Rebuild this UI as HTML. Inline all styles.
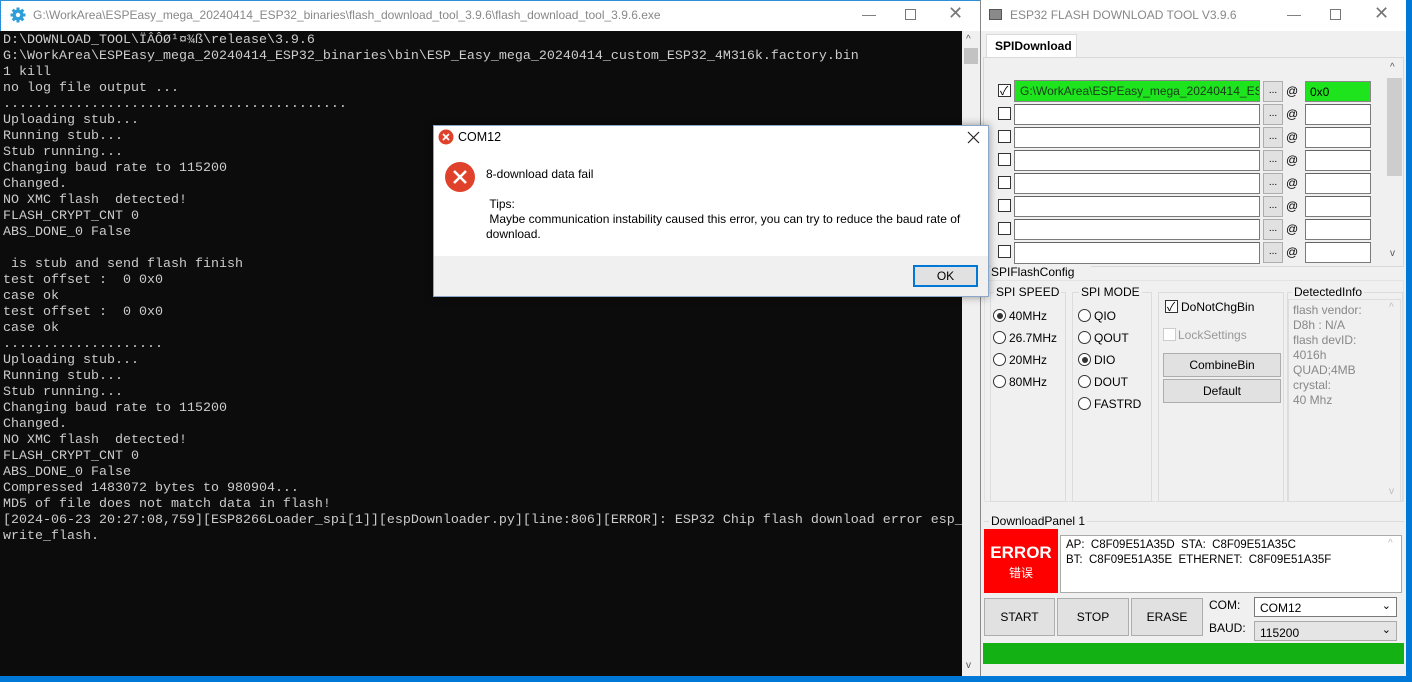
<!DOCTYPE html>
<html><head><meta charset="utf-8"><style>
*{margin:0;padding:0;box-sizing:border-box}
body{width:1412px;height:682px;overflow:hidden;background:#0078d7;position:relative;font-family:"Liberation Sans","Noto Sans CJK SC",sans-serif;font-size:12px;color:#000}
.a{position:absolute}
.con{left:0;top:31px;width:962px;height:645px;background:#0c0c0c;color:#cccccc;font-family:"Liberation Mono",monospace;font-size:13.33px;line-height:16px;white-space:pre;padding:2px 0 0 3px;overflow:hidden}
.tb{background:#fff}
.tf{background:#fff;border:1px solid #7a7a7a;border-top-color:#646464}
.btn{background:#e1e1e1;border:1px solid #adadad;text-align:center}
.cb{width:13px;height:13px;border:1px solid #333;background:#fff}
.rd{width:13px;height:13px;border:1px solid #333;border-radius:50%;background:#fff}
.grp{border:1px solid #dcdcdc}
.lbl{background:#f0f0f0;padding:0 2px}
</style></head><body>
<div class="a tb" style="left:0;top:0;width:980px;height:31px;border-top:1px solid #2b8fd9;border-left:1px solid #2b8fd9"></div>
<svg class="a" style="left:10px;top:7px" width="16" height="16" viewBox="0 0 16 16"><circle cx="8" cy="8" r="5.5" fill="#2e9ed8"/><g stroke="#2e9ed8" stroke-width="3"><line x1="8" y1="0.5" x2="8" y2="15.5"/><line x1="0.5" y1="8" x2="15.5" y2="8"/><line x1="2.7" y1="2.7" x2="13.3" y2="13.3"/><line x1="13.3" y1="2.7" x2="2.7" y2="13.3"/></g><circle cx="8" cy="8" r="2.2" fill="#fff"/></svg>
<div class="a" style="left:33px;top:8px;color:#888;font-size:12px">G:\WorkArea\ESPEasy_mega_20240414_ESP32_binaries\flash_download_tool_3.9.6\flash_download_tool_3.9.6.exe</div>
<div class="a" style="left:862px;top:6px;color:#777;font-size:14px">—</div>
<div class="a" style="left:905px;top:9px;width:11px;height:11px;border:1px solid #777"></div>
<div class="a" style="left:948px;top:3px;color:#777;font-size:18px">✕</div>
<div class="a con">D:\DOWNLOAD_TOOL\ÏÂÔØ¹¤¾ß\release\3.9.6
G:\WorkArea\ESPEasy_mega_20240414_ESP32_binaries\bin\ESP_Easy_mega_20240414_custom_ESP32_4M316k.factory.bin
1 kill
no log file output ...
...........................................
Uploading stub...
Running stub...
Stub running...
Changing baud rate to 115200
Changed.
NO XMC flash  detected!
FLASH_CRYPT_CNT 0
ABS_DONE_0 False

 is stub and send flash finish
test offset :  0 0x0
case ok
test offset :  0 0x0
case ok
....................
Uploading stub...
Running stub...
Stub running...
Changing baud rate to 115200
Changed.
NO XMC flash  detected!
FLASH_CRYPT_CNT 0
ABS_DONE_0 False
Compressed 1483072 bytes to 980904...
MD5 of file does not match data in flash!
[2024-06-23 20:27:08,759][ESP8266Loader_spi[1]][espDownloader.py][line:806][ERROR]: ESP32 Chip flash download error esp_
write_flash.</div>
<div class="a" style="left:962px;top:31px;width:18px;height:645px;background:#f0f0f0"></div>
<div class="a" style="left:966px;top:34px;color:#555;font-size:10px">^</div>
<div class="a" style="left:964px;top:48px;width:14px;height:16px;background:#c2c2c2"></div>
<div class="a" style="left:966px;top:660px;color:#555;font-size:10px">v</div>

<div class="a" style="left:980px;top:0;width:426px;height:676px;background:#f0f0f0;border-left:1px solid #888"></div>
<div class="a tb" style="left:981px;top:0;width:425px;height:31px"></div>
<div class="a" style="left:989px;top:9px;width:13px;height:11px;background:#8a8a8a;border:1px solid #555"></div>
<div class="a" style="left:1010px;top:8px;color:#888;font-size:12px">ESP32 FLASH DOWNLOAD TOOL V3.9.6</div>
<div class="a" style="left:1287px;top:6px;color:#777;font-size:14px">—</div>
<div class="a" style="left:1330px;top:9px;width:11px;height:11px;border:1px solid #777"></div>
<div class="a" style="left:1374px;top:3px;color:#777;font-size:18px">✕</div>
<div class="a" style="left:986px;top:34px;width:91px;height:24px;background:#fff;border:1px solid #d9d9d9;border-bottom:none;font-weight:bold;padding:4px 0 0 8px">SPIDownload</div>
<div class="a" style="left:983px;top:57px;width:421px;height:210px;border:1px solid #d9d9d9;background:#f0f0f0"></div>
<div class="a" style="left:1386px;top:62px;width:16px;height:200px;background:#f0f0f0"></div>
<div class="a" style="left:1390px;top:62px;color:#555;font-size:10px">^</div>
<div class="a" style="left:1387px;top:78px;width:15px;height:98px;background:#cdcdcd"></div>
<div class="a" style="left:1390px;top:248px;color:#555;font-size:10px">v</div>
<div class="a cb" style="left:998px;top:84px"><span style="position:absolute;left:1px;top:-3px;font-size:12px">✓</span></div>
<div class="a" style="left:1014px;top:80px;width:246px;height:22px;background:#1ee41e;border:1px solid #888;padding:3px 0 0 5px;white-space:nowrap;overflow:hidden;color:#1a3a1a">G:\WorkArea\ESPEasy_mega_20240414_ESP32_binaries</div>
<div class="a btn" style="left:1263px;top:81px;width:20px;height:21px;font-size:10px;line-height:18px">...</div>
<div class="a" style="left:1286px;top:84px">@</div>
<div class="a" style="left:1305px;top:81px;width:66px;height:21px;background:#1ee41e;border:1px solid #888;padding:3px 0 0 4px">0x0</div>
<div class="a cb" style="left:998px;top:107px"></div><div class="a tf" style="left:1014px;top:104px;width:246px;height:21px"></div><div class="a btn" style="left:1263px;top:104px;width:20px;height:21px;font-size:10px;line-height:18px">...</div><div class="a" style="left:1286px;top:107px">@</div><div class="a tf" style="left:1305px;top:104px;width:66px;height:21px"></div>
<div class="a cb" style="left:998px;top:130px"></div><div class="a tf" style="left:1014px;top:127px;width:246px;height:21px"></div><div class="a btn" style="left:1263px;top:127px;width:20px;height:21px;font-size:10px;line-height:18px">...</div><div class="a" style="left:1286px;top:130px">@</div><div class="a tf" style="left:1305px;top:127px;width:66px;height:21px"></div>
<div class="a cb" style="left:998px;top:153px"></div><div class="a tf" style="left:1014px;top:150px;width:246px;height:21px"></div><div class="a btn" style="left:1263px;top:150px;width:20px;height:21px;font-size:10px;line-height:18px">...</div><div class="a" style="left:1286px;top:153px">@</div><div class="a tf" style="left:1305px;top:150px;width:66px;height:21px"></div>
<div class="a cb" style="left:998px;top:176px"></div><div class="a tf" style="left:1014px;top:173px;width:246px;height:21px"></div><div class="a btn" style="left:1263px;top:173px;width:20px;height:21px;font-size:10px;line-height:18px">...</div><div class="a" style="left:1286px;top:176px">@</div><div class="a tf" style="left:1305px;top:173px;width:66px;height:21px"></div>
<div class="a cb" style="left:998px;top:199px"></div><div class="a tf" style="left:1014px;top:196px;width:246px;height:21px"></div><div class="a btn" style="left:1263px;top:196px;width:20px;height:21px;font-size:10px;line-height:18px">...</div><div class="a" style="left:1286px;top:199px">@</div><div class="a tf" style="left:1305px;top:196px;width:66px;height:21px"></div>
<div class="a cb" style="left:998px;top:222px"></div><div class="a tf" style="left:1014px;top:219px;width:246px;height:21px"></div><div class="a btn" style="left:1263px;top:219px;width:20px;height:21px;font-size:10px;line-height:18px">...</div><div class="a" style="left:1286px;top:222px">@</div><div class="a tf" style="left:1305px;top:219px;width:66px;height:21px"></div>
<div class="a cb" style="left:998px;top:245px"></div><div class="a tf" style="left:1014px;top:242px;width:246px;height:22px"></div><div class="a btn" style="left:1263px;top:242px;width:20px;height:21px;font-size:10px;line-height:18px">...</div><div class="a" style="left:1286px;top:245px">@</div><div class="a tf" style="left:1305px;top:242px;width:66px;height:21px"></div>

<div class="a" style="left:991px;top:264px;width:100px;background:#f0f0f0;padding-top:1px">SPIFlashConfig</div>
<div class="a grp" style="left:984px;top:280px;width:420px;height:222px;border-color:#e3e3e3"></div>
<div class="a grp" style="left:990px;top:292px;width:76px;height:210px"></div>
<div class="a lbl" style="left:994px;top:285px">SPI SPEED</div>
<div class="a rd" style="left:993px;top:309px"><span style="position:absolute;left:2.5px;top:2.5px;width:6px;height:6px;border-radius:50%;background:#333"></span></div><div class="a" style="left:1009px;top:309px">40MHz</div>
<div class="a rd" style="left:993px;top:331px"></div><div class="a" style="left:1009px;top:331px">26.7MHz</div>
<div class="a rd" style="left:993px;top:353px"></div><div class="a" style="left:1009px;top:353px">20MHz</div>
<div class="a rd" style="left:993px;top:375px"></div><div class="a" style="left:1009px;top:375px">80MHz</div>
<div class="a grp" style="left:1072px;top:292px;width:80px;height:210px"></div>
<div class="a lbl" style="left:1079px;top:285px">SPI MODE</div>
<div class="a rd" style="left:1078px;top:309px"></div><div class="a" style="left:1094px;top:309px">QIO</div>
<div class="a rd" style="left:1078px;top:331px"></div><div class="a" style="left:1094px;top:331px">QOUT</div>
<div class="a rd" style="left:1078px;top:353px"><span style="position:absolute;left:2.5px;top:2.5px;width:6px;height:6px;border-radius:50%;background:#333"></span></div><div class="a" style="left:1094px;top:353px">DIO</div>
<div class="a rd" style="left:1078px;top:375px"></div><div class="a" style="left:1094px;top:375px">DOUT</div>
<div class="a rd" style="left:1078px;top:397px"></div><div class="a" style="left:1094px;top:397px">FASTRD</div>
<div class="a grp" style="left:1158px;top:292px;width:126px;height:210px"></div>
<div class="a cb" style="left:1165px;top:300px"><span style="position:absolute;left:1px;top:-3px;font-size:12px">✓</span></div><div class="a" style="left:1181px;top:300px">DoNotChgBin</div>
<div class="a cb" style="left:1163px;top:328px;border-color:#ccc"></div><div class="a" style="left:1178px;top:328px;color:#999">LockSettings</div>
<div class="a btn" style="left:1163px;top:353px;width:118px;height:24px;line-height:22px">CombineBin</div>
<div class="a btn" style="left:1163px;top:379px;width:118px;height:24px;line-height:22px">Default</div>
<div class="a grp" style="left:1287px;top:292px;width:116px;height:210px"></div>
<div class="a lbl" style="left:1292px;top:285px">DetectedInfo</div>
<div class="a" style="left:1288px;top:299px;width:113px;height:203px;border:1px solid #ddd;background:#f0f0f0;color:#888;padding:3px 0 0 4px;line-height:15px">flash vendor:<br>D8h : N/A<br>flash devID:<br>4016h<br>QUAD;4MB<br>crystal:<br>40 Mhz</div>
<div class="a" style="left:1389px;top:302px;color:#bbb;font-size:10px">^</div>
<div class="a" style="left:1389px;top:486px;color:#bbb;font-size:10px">v</div>

<div class="a grp" style="left:984px;top:521px;width:420px;height:1px;border-width:1px 0 0 0"></div>
<div class="a lbl" style="left:989px;top:514px">DownloadPanel 1</div>
<div class="a" style="left:984px;top:529px;width:74px;height:64px;background:#ff0000;color:#fff;text-align:center"><div style="font-size:17px;font-weight:bold;margin-top:14px">ERROR</div><div style="font-size:12px;margin-top:1px;font-family:'Noto Sans CJK SC',sans-serif">错误</div></div>
<div class="a" style="left:1060px;top:535px;width:342px;height:58px;background:#fff;border:1px solid #aaa;padding:2px 0 0 5px;line-height:15px;font-size:11.5px">AP:&nbsp; C8F09E51A35D&nbsp; STA:&nbsp; C8F09E51A35C<br>BT:&nbsp; C8F09E51A35E&nbsp; ETHERNET:&nbsp; C8F09E51A35F</div>
<div class="a" style="left:1388px;top:538px;color:#bbb;font-size:10px">^</div>
<div class="a btn" style="left:984px;top:598px;width:71px;height:38px;line-height:36px">START</div>
<div class="a btn" style="left:1057px;top:598px;width:72px;height:38px;line-height:36px">STOP</div>
<div class="a btn" style="left:1131px;top:598px;width:72px;height:38px;line-height:36px">ERASE</div>
<div class="a" style="left:1209px;top:598px">COM:</div>
<div class="a" style="left:1209px;top:621px">BAUD:</div>
<div class="a" style="left:1254px;top:597px;width:143px;height:20px;background:#fff;border:1px solid #7a7a7a;padding:3px 0 0 5px">COM12<span style="position:absolute;right:5px;top:1px;font-size:11px">⌄</span></div>
<div class="a" style="left:1254px;top:621px;width:143px;height:20px;background:#e5e5e5;border:1px solid #aaa;padding:4px 0 0 5px">115200<span style="position:absolute;right:5px;top:1px;font-size:11px">⌄</span></div>
<div class="a" style="left:983px;top:643px;width:421px;height:21px;background:#14b114"></div>

<div class="a" style="left:433px;top:125px;width:556px;height:172px;border:1px solid #8aa6c8;background:#fff;box-shadow:0 0 8px rgba(0,0,0,.4)"></div>
<svg class="a" style="left:438px;top:129px" width="16" height="16" viewBox="0 0 16 16"><circle cx="8" cy="8" r="7.5" fill="#e0412b"/><path d="M5 5L11 11M11 5L5 11" stroke="#fff" stroke-width="1.8"/></svg>
<div class="a" style="left:458px;top:130px;font-size:12.5px">COM12</div>
<svg class="a" style="left:967px;top:131px" width="13" height="13" viewBox="0 0 13 13"><path d="M1 1L12 12M12 1L1 12" stroke="#222" stroke-width="1.2"/></svg>
<svg class="a" style="left:444px;top:161px" width="32" height="32" viewBox="0 0 32 32"><circle cx="16" cy="16" r="15" fill="#e0412b"/><path d="M10 10L22 22M22 10L10 22" stroke="#fff" stroke-width="2.6"/></svg>
<div class="a" style="left:486px;top:167px;font-size:12px">8-download data fail</div>
<div class="a" style="left:486px;top:197px;font-size:12px;line-height:15px;width:490px">&nbsp;Tips:<br>&nbsp;Maybe communication instability caused this error, you can try to reduce the baud rate of download.</div>
<div class="a" style="left:434px;top:256px;width:554px;height:40px;background:#f0f0f0"></div>
<div class="a" style="left:913px;top:265px;width:65px;height:22px;background:#e1e1e1;border:2px solid #0078d7;text-align:center;line-height:18px">OK</div>
</body></html>
